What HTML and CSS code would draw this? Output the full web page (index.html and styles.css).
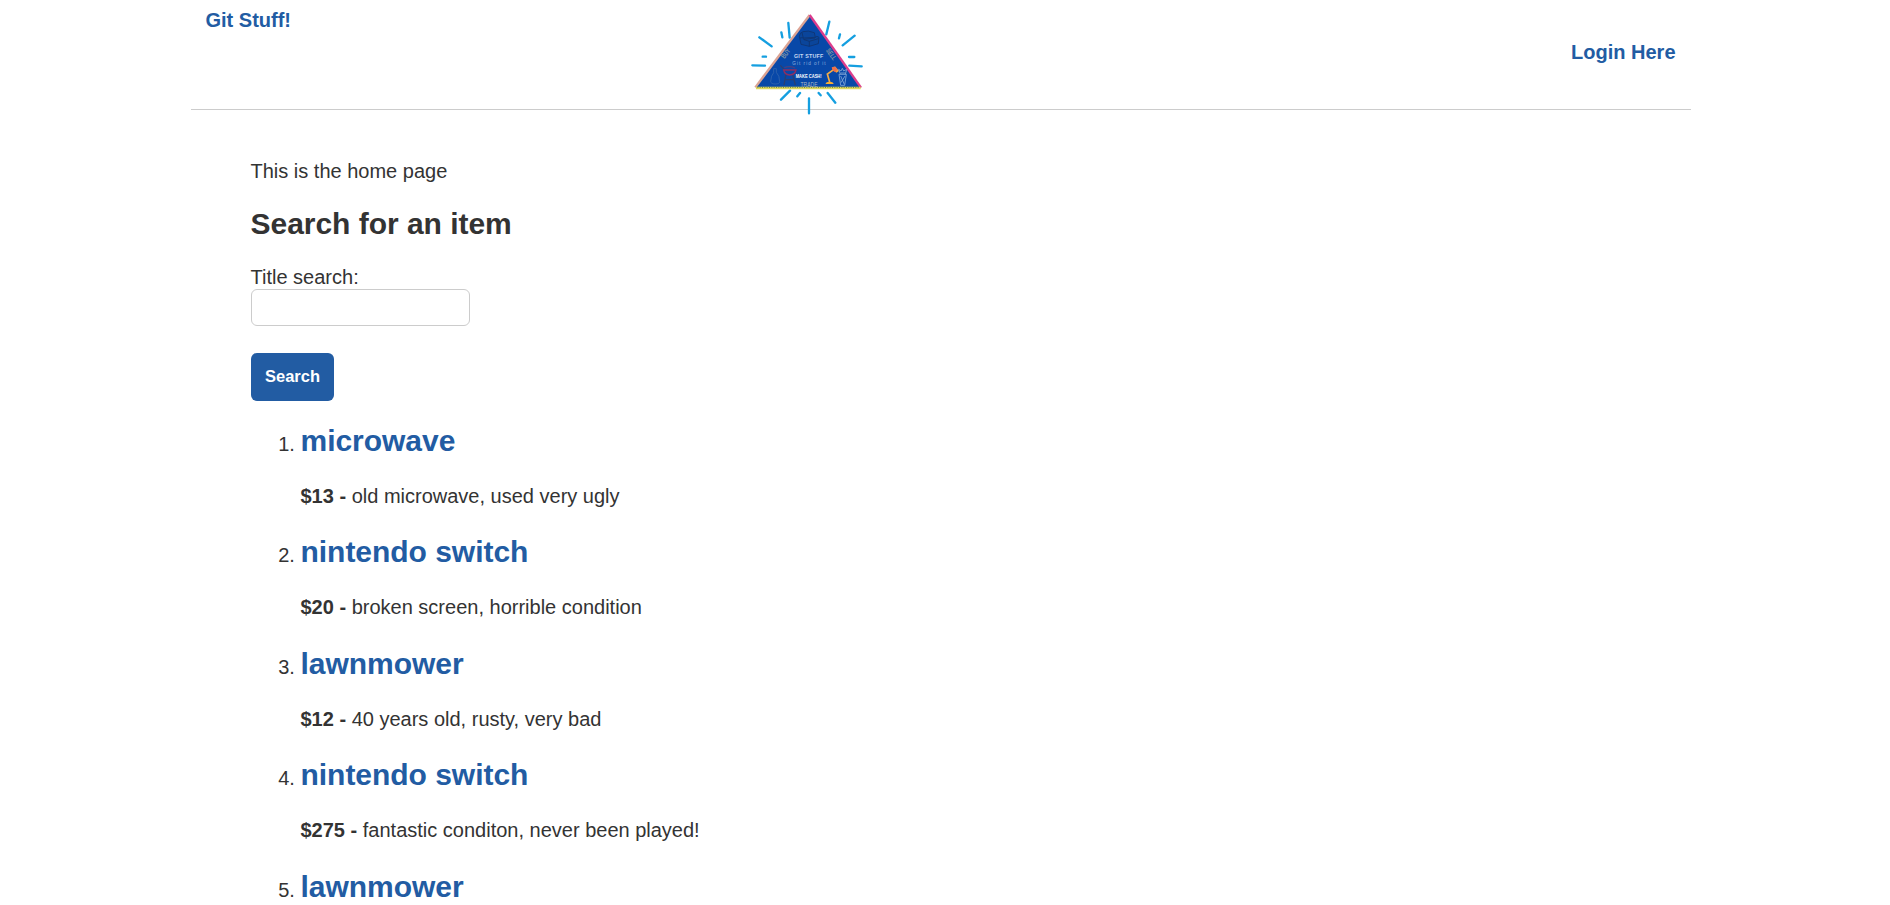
FILE: index.html
```html
<!DOCTYPE html>
<html lang="en">
<head>
<meta charset="utf-8">
<title>Git Stuff!</title>
<link rel="stylesheet" href="styles.css">
</head>
<body>
<header class="header">
  <a class="brand" href="#">Git Stuff!</a>
  <svg class="logo" viewBox="0 0 390 345" role="img" aria-label="Git Stuff logo">
    <g class="rays">
      <path d="M58 97L95 124M145 54L149 98M124 82L127 97M68 155L78 155M37 181L75 182M268 50L259 88M300 88L297 100M344 92L308 121M327 156L343 156M328 182L365 184M150 257L123 284M207 280V325M180 264L172 274M236 264L242 271M263 264L286 293"/>
    </g>
    <path d="M209 31L361 247H48Z" fill="#0848a8"/>
    <path class="edge" d="M209 30L46 247" stroke="#dba394"/>
    <path class="edge" d="M209 30L363 248" stroke="#dc3d8c"/>
    <path class="edge" d="M48 249H362" stroke="#e0d85b"/>
    <path class="edge-dots" d="M52 247H358"/>
    <g class="sofa">
      <path d="M181 85Q176 94 180 103L183 118L208 124L235 116L237 97Q230 91 226 97L223 83Q204 75 189 80Z M186 83L190 99L226 97M180 99Q189 94 192 104L208 109L235 101M208 109V124M191 103L225 99"/>
    </g>
    <g class="bottle"><path d="M101 191H109V202Q119 212 119 230Q119 237 106 237Q92 237 92 229Q93 211 101 203Z"/></g>
    <g class="grill">
      <path d="M121 181L133 194M138 207L132 240M158 207L166 240M137 224H161" stroke="#2c3f70"/>
      <path d="M131 195H168Q165 209 149 210Q134 209 131 195Z" stroke="#8d2e61"/>
      <path d="M133 188Q149 181 165 189" stroke="#4a4080"/>
    </g>
    <g class="lamp">
      <path class="lamp-arm" d="M269 231L262 207L282 193"/>
      <path d="M276 190L285 184L297 198L289 203Z" fill="#f5a33a"/>
      <path d="M275 187Q285 181 293 193L286 202Q277 199 275 187Z" fill="#ed704d"/>
      <path d="M256 237Q259 229 269 230Q279 230 281 237Z" fill="#f8ae32"/>
    </g>
    <g class="cup"><path d="M297 208H319L314 241H302ZM301 207L296 193L303 198L307 190L311 198L320 193L316 208M302 213L313 238M315 213L303 233M302 204H316"/></g>
    <text class="script-text" x="206" y="159" textLength="88" lengthAdjust="spacing">GIT STUFF</text>
    <text class="small-text" x="207" y="181" textLength="100" lengthAdjust="spacing">Git rid of it</text>
    <text class="cash-text" x="206" y="218" textLength="78" lengthAdjust="spacingAndGlyphs">MAKE CASH!</text>
    <text class="trade-text" x="207" y="245" textLength="51" lengthAdjust="spacingAndGlyphs">TRADE</text>
    <text class="side-text" transform="translate(143 150) rotate(-53)" textLength="31" lengthAdjust="spacingAndGlyphs">BUY</text>
    <text class="side-text" transform="translate(268 152) rotate(55)" textLength="38" lengthAdjust="spacingAndGlyphs">SELL</text>
  </svg>
  <a class="login" href="#">Login Here</a>
</header>
<main class="content">
  <p class="intro">This is the home page</p>
  <h2 class="title">Search for an item</h2>
  <form class="search">
    <label class="label" for="q">Title search:</label>
    <input class="field" id="q" type="text">
    <button class="button" type="button">Search</button>
  </form>
  <ol class="items">
    <li class="item"><h2 class="name"><a href="#">microwave</a></h2><p class="detail"><b>$13 -</b> old microwave, used very ugly</p></li>
    <li class="item"><h2 class="name"><a href="#">nintendo switch</a></h2><p class="detail"><b>$20 -</b> broken screen, horrible condition</p></li>
    <li class="item"><h2 class="name"><a href="#">lawnmower</a></h2><p class="detail"><b>$12 -</b> 40 years old, rusty, very bad</p></li>
    <li class="item"><h2 class="name"><a href="#">nintendo switch</a></h2><p class="detail"><b>$275 -</b> fantastic conditon, never been played!</p></li>
    <li class="item"><h2 class="name"><a href="#">lawnmower</a></h2></li>
  </ol>
</main>
</body>
</html>
```
FILE: styles.css
```css
* { box-sizing: border-box; }
body {
  width: 1500px;
  margin: 0 0 0 191px;
  background: #fff;
  color: #333;
  font: 20px/23px "Liberation Sans", Arial, sans-serif;
}
a { color: #225ca3; font-weight: bold; text-decoration: none; }
.header {
  display: grid;
  grid-template-columns: 534.5px 1fr auto;
  align-items: start;
  height: 110px;
  padding: 0 15.5px 0 14.5px;
  border-bottom: 1px solid #ccc;
}
.brand { padding-top: 9px; }
.login { padding-top: 41px; }
.logo { width: 130px; height: 115px; margin-top: 5px; }
.rays { fill: none; stroke: #159fe0; stroke-width: 7; stroke-linecap: round; }
.edge { fill: none; stroke-width: 7; }
.edge-dots { fill: none; stroke: #5b7550; stroke-width: 3; stroke-dasharray: 3 4; }
.sofa { fill: #0a459b; stroke: #10346f; stroke-width: 2.5; }
.bottle { fill: none; stroke: #3265ac; stroke-width: 2.5; }
.grill { fill: none; stroke-width: 4; }
.lamp-arm { fill: none; stroke: #f6ac45; stroke-width: 5; }
.cup { fill: none; stroke: #85a9d9; stroke-width: 2.5; }
.logo text { font-family: "Liberation Sans", Arial, sans-serif; }
.script-text, .small-text, .cash-text, .trade-text { text-anchor: middle; }
.script-text { font-size: 16px; font-weight: bold; fill: #c8daf1; }
.small-text { font-size: 14px; fill: #8fb0de; }
.cash-text { font-size: 18px; font-weight: bold; fill: #fff; }
.trade-text { font-size: 21px; fill: #aab8c2; }
.side-text { font-size: 22px; font-weight: bold; fill: #8296a6; text-anchor: middle; }
.content { padding: 50px 59.5px 0; }
.intro { margin: 0 0 24px; }
.title, .name { margin: 0; font-size: 30px; line-height: 34px; letter-spacing: -0.03px; }
.search { display: flex; flex-direction: column; align-items: flex-start; margin-top: 25px; }
.field {
  width: 219px;
  height: 37px;
  margin-left: 0.5px;
  border: 1px solid #ccc;
  border-radius: 6px;
  outline: none;
}
.button {
  width: 83px;
  height: 48px;
  margin: 27px 0 0 0.5px;
  padding: 0 0 2px;
  border: 0;
  border-radius: 6px;
  background: #225ca3;
  color: #fff;
  font: bold 16.5px "Liberation Sans", Arial, sans-serif;
}
.items { margin: 23px 0 0; padding-left: 50px; }
.item { height: 111.4px; }
.item:last-child { height: auto; }
.detail { margin: 27px 0 0; }
```
